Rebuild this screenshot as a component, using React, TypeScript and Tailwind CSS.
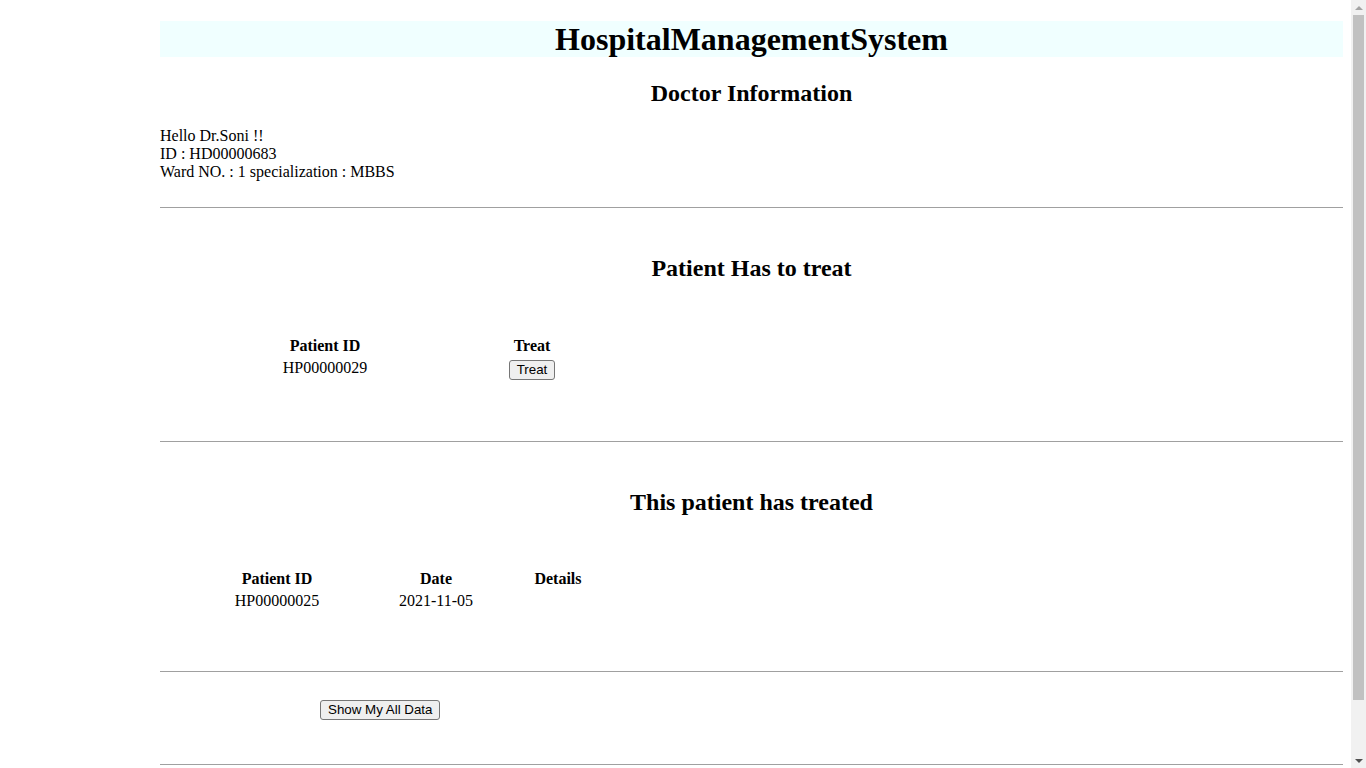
export default function App() {
  const serif = { fontFamily: '"Liberation Serif", "Times New Roman", serif' };
  const sans = { fontFamily: '"Liberation Sans", Arial, sans-serif' };
  return (
    <div className="min-h-[828px] bg-white text-black" style={serif}>
      <div className="ml-[160px] mr-[23px] pt-[21px] pb-[60px]">
        <h1 className="h-9 bg-[#f0ffff] text-center text-[32px] font-bold leading-9">
          HospitalManagementSystem
        </h1>

        <h2 className="mt-[22px] text-center text-2xl font-bold leading-7">Doctor Information</h2>

        <div className="mt-[20px] text-base leading-[18px]">
          <div>Hello Dr.Soni !!</div>
          <div>ID : HD00000683</div>
          <div>Ward NO. : 1 specialization : MBBS</div>
        </div>

        <hr className="mt-[26px] border-t border-[#a0a0a0]" />

        <h2 className="mt-[46px] text-center text-2xl font-bold leading-7">Patient Has to treat</h2>

        <table className="mt-[55px] ml-[80px] border-collapse text-base">
          <thead>
            <tr className="h-[18px] leading-[18px]">
              <th className="w-[170px] p-0 text-center font-bold">Patient ID</th>
              <th className="w-[244px] p-0 text-center font-bold">Treat</th>
            </tr>
          </thead>
          <tbody>
            <tr className="leading-[18px]">
              <td className="p-0 pt-[4px] align-top text-center">HP00000029</td>
              <td className="p-0 pt-[5px] align-top text-center">
                <button
                  className="h-5 rounded-[3px] border border-[#767676] bg-[#efefef] px-[7px] text-[13.33px] leading-[16px] text-black"
                  style={sans}
                >
                  Treat
                </button>
              </td>
            </tr>
          </tbody>
        </table>

        <hr className="mt-[61px] border-t border-[#a0a0a0]" />

        <h2 className="mt-[46px] text-center text-2xl font-bold leading-7">This patient has treated</h2>

        <table className="mt-[54px] ml-[30px] border-collapse text-base">
          <thead>
            <tr className="h-[18px] leading-[18px]">
              <th className="w-[174px] p-0 text-center font-bold">Patient ID</th>
              <th className="w-[144px] p-0 text-center font-bold">Date</th>
              <th className="w-[100px] p-0 text-center font-bold">Details</th>
            </tr>
          </thead>
          <tbody>
            <tr className="leading-[18px]">
              <td className="p-0 pt-[4px] text-center">HP00000025</td>
              <td className="p-0 pt-[4px] text-center">2021-11-05</td>
              <td className="p-0 pt-[4px] text-center"></td>
            </tr>
          </tbody>
        </table>

        <hr className="mt-[61px] border-t border-[#a0a0a0]" />

        <div className="mt-[25px] pl-[160px]">
          <button
            className="h-5 rounded-[3px] border border-[#767676] bg-[#efefef] px-[7px] text-[13.33px] leading-[16px] text-black"
            style={sans}
          >
            Show My All Data
          </button>
        </div>

        <hr className="mt-[43px] border-t border-[#a0a0a0]" />
      </div>

      {/* browser scrollbar as it shows in the screenshot */}
      <div className="fixed right-0 top-0 flex h-screen w-[15px] flex-col items-center bg-[#f1f1f1]">
        <div className="flex h-[15px] w-full items-center justify-center">
          <div className="h-0 w-0 border-x-[4px] border-b-[4px] border-x-transparent border-b-[#a3a3a3]" />
        </div>
        <div className="h-[685px] w-[11px] bg-[#c1c1c1]" />
        <div className="flex-1" />
        <div className="flex h-[15px] w-full items-center justify-center">
          <div className="h-0 w-0 border-x-[4px] border-t-[4px] border-x-transparent border-t-[#505050]" />
        </div>
      </div>
    </div>
  );
}
